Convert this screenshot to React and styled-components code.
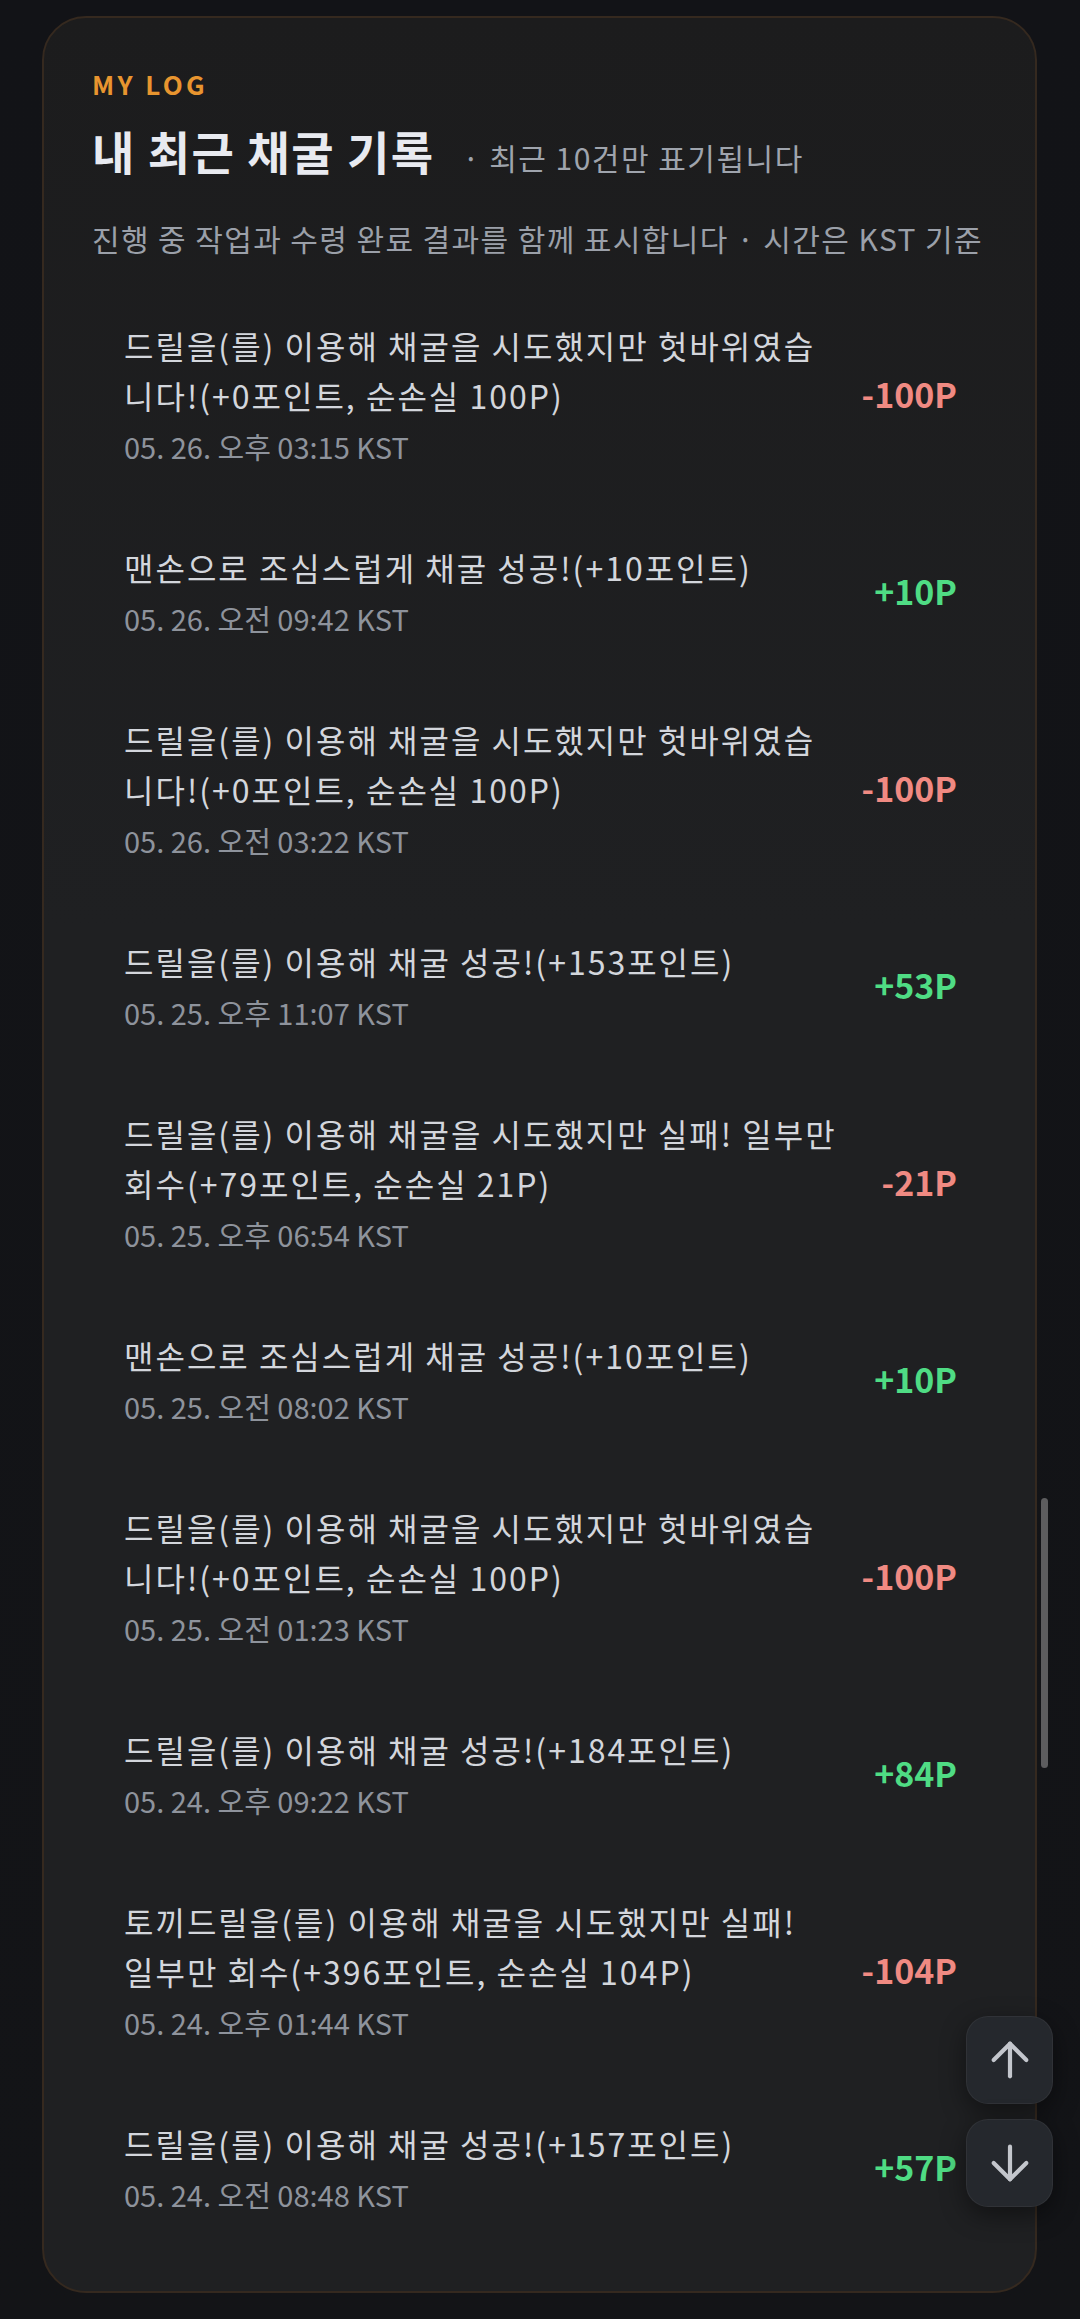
import { createGlobalStyle, styled } from "styled-components"
import { ArrowUp, ArrowDown } from "lucide-react"

const logs = [
    { text: "드릴을(를) 이용해 채굴을 시도했지만 헛바위였습니다!(+0포인트, 순손실 100P)", date: "05. 26. 오후 03:15 KST", amount: "-100P" },
    { text: "맨손으로 조심스럽게 채굴 성공!(+10포인트)", date: "05. 26. 오전 09:42 KST", amount: "+10P" },
    { text: "드릴을(를) 이용해 채굴을 시도했지만 헛바위였습니다!(+0포인트, 순손실 100P)", date: "05. 26. 오전 03:22 KST", amount: "-100P" },
    { text: "드릴을(를) 이용해 채굴 성공!(+153포인트)", date: "05. 25. 오후 11:07 KST", amount: "+53P" },
    { text: "드릴을(를) 이용해 채굴을 시도했지만 실패! 일부만 회수(+79포인트, 순손실 21P)", date: "05. 25. 오후 06:54 KST", amount: "-21P" },
    { text: "맨손으로 조심스럽게 채굴 성공!(+10포인트)", date: "05. 25. 오전 08:02 KST", amount: "+10P" },
    { text: "드릴을(를) 이용해 채굴을 시도했지만 헛바위였습니다!(+0포인트, 순손실 100P)", date: "05. 25. 오전 01:23 KST", amount: "-100P" },
    { text: "드릴을(를) 이용해 채굴 성공!(+184포인트)", date: "05. 24. 오후 09:22 KST", amount: "+84P" },
    { text: "토끼드릴을(를) 이용해 채굴을 시도했지만 실패! 일부만 회수(+396포인트, 순손실 104P)", date: "05. 24. 오후 01:44 KST", amount: "-104P" },
    { text: "드릴을(를) 이용해 채굴 성공!(+157포인트)", date: "05. 24. 오전 08:48 KST", amount: "+57P" },
]

const GlobalStyle = createGlobalStyle`
    html, body {
        margin: 0;
        padding: 0;
        background: #121317;
    }
    body {
        font-family: "Noto Sans CJK KR", "Noto Sans", sans-serif;
        -webkit-font-smoothing: antialiased;
    }
`

const Page = styled.div`
    min-height: 2319px;
    box-sizing: border-box;
    padding: 16px 43px 26px 42px;
    background: linear-gradient(180deg, #121317 0%, #131417 100%);
`

const Card = styled.section`
    box-sizing: border-box;
    border: 2px solid #35291f;
    border-radius: 44px;
    padding: 48px 48px 39px 48px;
    background: linear-gradient(180deg, #1c1c1d 0%, #1f2022 40%, #1f2022 100%);
`

const Eyebrow = styled.div`
    font-size: 26px;
    line-height: 36px;
    font-weight: 700;
    letter-spacing: 0.13em;
    color: #e8952f;
`

const TitleRow = styled.div`
    margin-top: 18px;
    display: flex;
    align-items: baseline;
`

const Title = styled.h1`
    margin: 0;
    font-size: 46px;
    line-height: 60px;
    font-weight: 700;
    letter-spacing: 1.5px;
    color: #e8eaf0;
`

const Sub = styled.span`
    margin-left: 28px;
    font-size: 30px;
    letter-spacing: 1.5px;
    color: #9fa4ad;
`

const Desc = styled.p`
    margin: 36px 0 0;
    font-size: 30px;
    line-height: 44px;
    letter-spacing: 1.4px;
    white-space: nowrap;
    color: #9ba0a9;
`

const List = styled.ul`
    list-style: none;
    margin: 22px 0 0;
    padding: 0;
`

const Item = styled.li`
    display: flex;
    align-items: center;
    gap: 32px;
    padding: 38px 30px 38px 32px;
`

const ItemBody = styled.div`
    flex: 1;
    min-width: 0;
`

const ItemText = styled.div`
    font-size: 32px;
    line-height: 50px;
    letter-spacing: 2px;
    color: #d3d6dc;
`

const ItemDate = styled.div`
    margin-top: 6px;
    font-size: 29px;
    line-height: 40px;
    color: #8e939c;
`

const Amount = styled.div`
    flex-shrink: 0;
    text-align: right;
    font-size: 34px;
    font-weight: 700;
    color: ${(p) => (p.$loss ? "#f08a82" : "#4fdc84")};
`

const Floating = styled.div`
    position: fixed;
    right: 27px;
    bottom: 112px;
    display: flex;
    flex-direction: column;
    gap: 15px;
`

const ScrollButton = styled.button`
    width: 87px;
    height: 88px;
    box-sizing: border-box;
    display: flex;
    align-items: center;
    justify-content: center;
    padding: 0;
    border-radius: 22px;
    border: 1px solid rgba(255, 255, 255, 0.05);
    background: #25282d;
    color: #c3c6cc;
    box-shadow: 0 8px 26px rgba(0, 0, 0, 0.45);
    cursor: pointer;
`

const Thumb = styled.div`
    position: fixed;
    left: 1041px;
    top: 1498px;
    width: 7px;
    height: 270px;
    border-radius: 4px;
    background: #5d5d5f;
`

export default function App() {
    return <Page>
        <GlobalStyle />
        <Card>
            <Eyebrow>MY LOG</Eyebrow>
            <TitleRow>
                <Title>내 최근 채굴 기록</Title>
                <Sub>· 최근 10건만 표기됩니다</Sub>
            </TitleRow>
            <Desc>진행 중 작업과 수령 완료 결과를 함께 표시합니다 · 시간은 KST 기준</Desc>
            <List>
                {logs.map((log, i) => (
                    <Item key={i}>
                        <ItemBody>
                            <ItemText>{log.text}</ItemText>
                            <ItemDate>{log.date}</ItemDate>
                        </ItemBody>
                        <Amount $loss={log.amount.startsWith("-")}>{log.amount}</Amount>
                    </Item>
                ))}
            </List>
        </Card>
        <Floating>
            <ScrollButton aria-label="맨 위로"><ArrowUp size={56} strokeWidth={1.8} /></ScrollButton>
            <ScrollButton aria-label="맨 아래로"><ArrowDown size={56} strokeWidth={1.8} /></ScrollButton>
        </Floating>
        <Thumb />
    </Page>
}
